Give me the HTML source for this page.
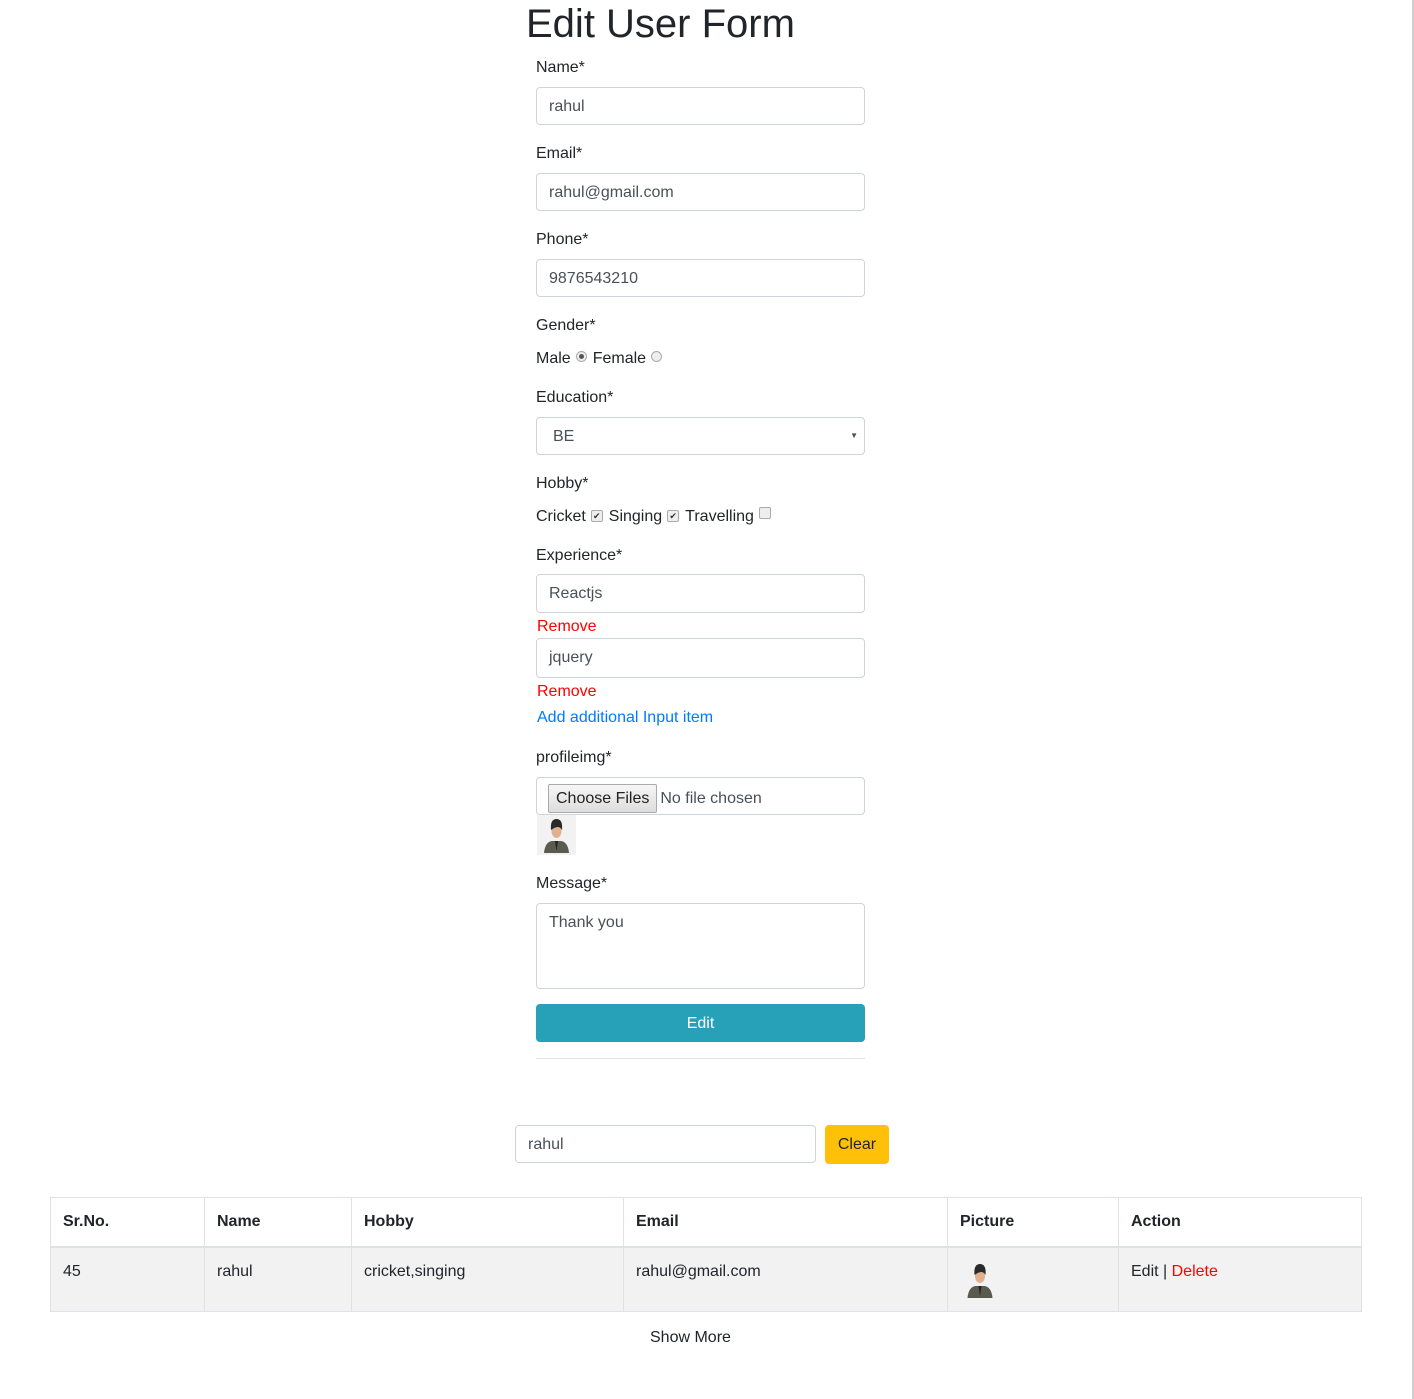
<!DOCTYPE html>
<html><head><meta charset="utf-8">
<style>
*{box-sizing:border-box;margin:0;padding:0}
body{width:1414px;height:1399px;background:#fff;font-family:"Liberation Sans",Arial,sans-serif;font-size:16px;color:#212529;position:relative;overflow:hidden}
.a{position:absolute;line-height:24px;white-space:nowrap}
.inp{position:absolute;left:536px;width:329px;height:38px;border:1px solid #ced4da;border-radius:4px;background:#fff;color:#495057;padding-left:12px;padding-top:1px;line-height:36px}
.lbl{position:absolute;left:536px;line-height:24px}
.red{color:#f00}
.blue{color:#007bff}
.rad{display:inline-block;width:11px;height:11px;border:1px solid #aaa;border-radius:50%;background:#eee;vertical-align:1px;position:relative;margin:0 6px 0 5px}
.rad.on::after{content:"";position:absolute;left:2px;top:2px;width:5px;height:5px;border-radius:50%;background:#555}
.chk{display:inline-block;width:12px;height:12px;border:1px solid #aaa;border-radius:2px;background:#eee;vertical-align:2px;margin:0 6px 0 5px;font-size:9px;line-height:10px;text-align:center;color:#333}
table{position:absolute;left:50px;top:1197px;width:1312px;border-collapse:collapse}
td,th{border:1px solid #dee2e6;text-align:left;padding:0 12px;vertical-align:top}
th{height:48px;line-height:48px;font-weight:bold;border-bottom:2px solid #dee2e6}
td{height:64px;padding-top:12px;line-height:24px;background:#f2f2f2}
</style></head><body>
<div style="position:absolute;right:0;top:0;width:2px;height:1399px;background:#d0d0d0"></div>
<div class="a" style="left:526px;top:1px;font-size:40px;line-height:46px;font-weight:400">Edit User Form</div>

<div class="lbl" style="top:56px">Name*</div>
<div class="inp" style="top:87px">rahul</div>
<div class="lbl" style="top:142px">Email*</div>
<div class="inp" style="top:173px">rahul@gmail.com</div>
<div class="lbl" style="top:228px">Phone*</div>
<div class="inp" style="top:259px">9876543210</div>
<div class="lbl" style="top:314px">Gender*</div>
<div class="lbl" style="top:347px">Male<span class="rad on"></span>Female<span class="rad"></span></div>
<div class="lbl" style="top:386px">Education*</div>
<div class="inp" style="top:417px;padding-left:16px">BE<span style="position:absolute;right:6px;top:0;font-size:8px">▼</span></div>
<div class="lbl" style="top:472px">Hobby*</div>
<div class="lbl" style="top:505px">Cricket<span class="chk">✔</span>Singing<span class="chk">✔</span>Travelling<span class="chk"></span></div>
<div class="lbl" style="top:544px">Experience*</div>
<div class="inp" style="top:574px;height:39px">Reactjs</div>
<div class="lbl red" style="top:615px;left:537px">Remove</div>
<div class="inp" style="top:638px;height:40px">jquery</div>
<div class="lbl red" style="top:680px;left:537px">Remove</div>
<div class="lbl blue" style="top:706px;left:537px">Add additional Input item</div>
<div class="lbl" style="top:746px">profileimg*</div>
<div class="inp" style="top:777px;padding-left:11px;padding-top:0"><span style="display:inline-block;height:29px;margin-top:6px;vertical-align:top;border:1px solid #aaa;border-radius:2px;background:linear-gradient(#f6f6f6,#ddd);color:#222;padding:0 7px;line-height:27px">Choose Files</span><span style="display:inline-block;vertical-align:top;line-height:42px;margin-left:3px;color:#495057">No file chosen</span></div>
<svg style="position:absolute;left:537px;top:815px" width="39" height="40" viewBox="0 0 39 40"><rect width="39" height="40" fill="#f2f2f2"/><path d="M7 38 Q8 27 15 26 L24 26 Q31 27 32 38 Z" fill="#5a5a4e"/><path d="M18 26 L19.5 36 L21 26Z" fill="#222"/><ellipse cx="19.5" cy="16" rx="5" ry="7" fill="#e0b090"/><path d="M14 15 Q13 4 19.5 4 Q26 4 25 15 Q22 9 14 15Z" fill="#2a2a2a"/></svg>
<div class="lbl" style="top:872px">Message*</div>
<div class="inp" style="top:903px;height:86px;line-height:24px;padding-top:7px">Thank you</div>
<div class="a" style="left:536px;top:1004px;width:329px;height:38px;background:#27a1b8;border-radius:4px;color:#fff;text-align:center;line-height:39px">Edit</div>
<div style="position:absolute;left:536px;top:1058px;width:329px;height:1px;background:#e5e5e5"></div>

<div class="inp" style="left:515px;top:1125px;width:301px">rahul</div>
<div class="a" style="left:825px;top:1125px;width:64px;height:39px;background:#ffc107;border-radius:4px;text-align:center;line-height:40px">Clear</div>

<table>
<tr><th style="width:154px">Sr.No.</th><th style="width:147px">Name</th><th style="width:272px">Hobby</th><th style="width:324px">Email</th><th style="width:171px">Picture</th><th>Action</th></tr>
<tr><td>45</td><td>rahul</td><td>cricket,singing</td><td>rahul@gmail.com</td><td style="padding-top:12px"><svg width="40" height="40" viewBox="0 0 39 40"><rect width="39" height="40" fill="#f2f2f2"/><path d="M7 38 Q8 27 15 26 L24 26 Q31 27 32 38 Z" fill="#5a5a4e"/><path d="M18 26 L19.5 36 L21 26Z" fill="#222"/><ellipse cx="19.5" cy="16" rx="5" ry="7" fill="#e0b090"/><path d="M14 15 Q13 4 19.5 4 Q26 4 25 15 Q22 9 14 15Z" fill="#2a2a2a"/></svg></td><td>Edit | <span class="red">Delete</span></td></tr>
</table>
<div class="a" style="left:650px;top:1326px">Show More</div>
</body></html>
